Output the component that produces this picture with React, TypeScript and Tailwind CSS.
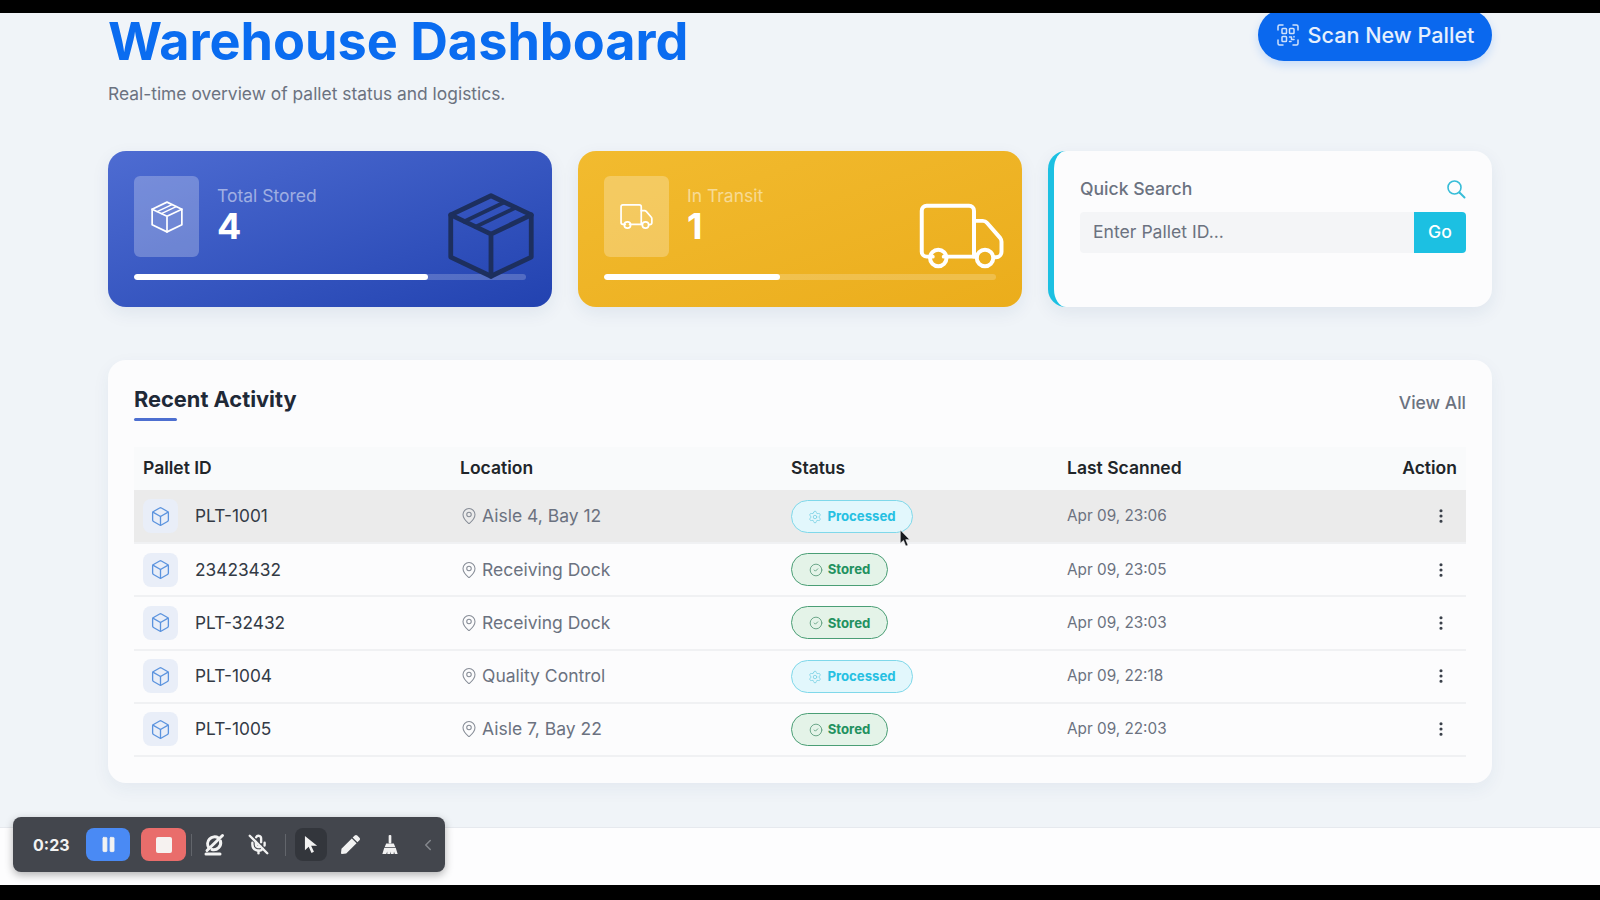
import { ChevronLeft, CircleCheck, EllipsisVertical, MapPin, MicOff, Pause, Settings, Square, Box } from "lucide-react";
import { FaPen } from "react-icons/fa";

const rows = [
  { id: "PLT-1001", location: "Aisle 4, Bay 12", status: "Processed", scanned: "Apr 09, 23:06", active: true },
  { id: "23423432", location: "Receiving Dock", status: "Stored", scanned: "Apr 09, 23:05" },
  { id: "PLT-32432", location: "Receiving Dock", status: "Stored", scanned: "Apr 09, 23:03" },
  { id: "PLT-1004", location: "Quality Control", status: "Processed", scanned: "Apr 09, 22:18" },
  { id: "PLT-1005", location: "Aisle 7, Bay 22", status: "Stored", scanned: "Apr 09, 22:03" },
];

function TapedBox({ className, strokeWidth = 1.5 }: { className?: string; strokeWidth?: number }) {
  return (
    <svg viewBox="0 0 24 24" fill="none" stroke="currentColor" strokeWidth={strokeWidth} strokeLinejoin="round" strokeLinecap="round" className={className}>
      <path d="M12 1.5 22.5 6.5v11L12 22.5 1.5 17.5v-11z" />
      <path d="M1.5 6.5 12 11.5l10.5-5M12 11.5v11" />
      <path d="M5 8.2 15.5 3.2M8 9.6 18.5 4.6" strokeWidth={strokeWidth * 0.8} />
    </svg>
  );
}

function DeliveryTruck({ className, strokeWidth = 1.6 }: { className?: string; strokeWidth?: number }) {
  return (
    <svg viewBox="0 0 32 24" fill="none" stroke="currentColor" strokeWidth={strokeWidth} strokeLinejoin="round" strokeLinecap="round" className={className}>
      <path d="M5 19.5H2.8A1.8 1.8 0 0 1 1 17.7V2.8A1.8 1.8 0 0 1 2.8 1h15.4A1.8 1.8 0 0 1 20 2.8v16.7" />
      <path d="M9 19.5h12" />
      <path d="M20 6.5h3.2c.6 0 1.1.2 1.5.7l4.8 5.5c.3.4.5.9.5 1.4v3.6a2 2 0 0 1-2 2h-.6" />
      <circle cx="7" cy="20" r="3" />
      <circle cx="24" cy="20" r="3" />
    </svg>
  );
}

function QrScan({ className }: { className?: string }) {
  return (
    <svg viewBox="0 0 24 24" fill="none" stroke="currentColor" strokeWidth="1.5" strokeLinecap="round" strokeLinejoin="round" className={className}>
      <path d="M2 7V3.5A1.5 1.5 0 0 1 3.5 2H7M17 2h3.5A1.5 1.5 0 0 1 22 3.5V7M22 17v3.5a1.5 1.5 0 0 1-1.5 1.5H17M7 22H3.5A1.5 1.5 0 0 1 2 20.5V17" />
      <rect x="6" y="5.5" width="4.5" height="5" rx="0.8" />
      <rect x="13.5" y="5.5" width="4.5" height="5" rx="0.8" />
      <rect x="6" y="13.5" width="4.5" height="5" rx="0.8" />
      <path d="M13.5 14h2v2.5h2.500M18 13.5v.5M13.5 18.500h1.500" />
    </svg>
  );
}

function StatCard({ tone, label, value, fill, small, big }: { tone: string; label: string; value: string; fill: string; small: React.ReactNode; big: React.ReactNode }) {
  return (
    <div className={`relative h-[156px] overflow-hidden rounded-[18px] px-[26px] pt-[25px] shadow-[0_6px_18px_rgba(30,60,120,0.08)] ${tone}`}>
      <div className="flex gap-[18px]">
        <div className="flex h-[81px] w-[65px] items-center justify-center rounded-[6px] bg-white/25 text-white">{small}</div>
        <div className="pt-[9px]">
          <p className="text-[17.5px] leading-[22px] text-white/50">{label}</p>
          <p className="text-[36px] font-bold leading-[38px] text-white">{value}</p>
        </div>
      </div>
      <div className="mt-[17px] h-[6px] overflow-hidden rounded-full bg-white/20">
        <div className={`h-full rounded-full bg-white ${fill}`} />
      </div>
      {big}
    </div>
  );
}

function StatusBadge({ status }: { status: string }) {
  if (status === "Stored") {
    return (
      <span className="inline-flex h-[33px] w-[97px] items-center justify-center gap-[5px] rounded-full border border-[#4a9e75] bg-[#e4f3e8] pt-px text-[13.2px] font-bold text-[#23915f]">
        <CircleCheck className="h-[14px] w-[14px] text-[#5a9c7c]" strokeWidth={1.5} />
        Stored
      </span>
    );
  }
  return (
    <span className="inline-flex h-[33px] w-[122px] items-center justify-center gap-[5px] rounded-full border border-[#7fd8ea] bg-[#e2f7fc] pt-px text-[13.2px] font-bold text-[#27c0e2]">
      <Settings className="h-[14px] w-[14px] text-[#7fd3e6]" strokeWidth={1.5} />
      Processed
    </span>
  );
}

function Toolbar() {
  return (
    <div className="absolute left-[13px] top-[817px] z-20 flex h-[55px] w-[432px] items-center rounded-[8px] bg-[#43464d] pl-[20px] text-[#f2f2f2] shadow-[0_3px_8px_rgba(0,0,0,0.3)]">
      <span className="w-[53px] text-[16px] font-bold">0:23</span>
      <span className="flex h-[33px] w-[44px] items-center justify-center rounded-[8px] bg-[#4a8af4]">
        <Pause className="h-[19px] w-[19px]" fill="currentColor" strokeWidth={1} />
      </span>
      <span className="ml-[11px] flex h-[33px] w-[45px] items-center justify-center rounded-[8px] bg-[#e96d6b]">
        <Square className="h-[16px] w-[16px] rounded-[2px] bg-[#f6f2f0]" strokeWidth={0} />
      </span>
      <span className="ml-[5px] h-[22px] w-px bg-[#62656b]" />
      <span className="ml-[11px] flex w-[22px] justify-center">
        <svg viewBox="0 0 22 22" className="h-[23px] w-[23px]" fill="none" stroke="currentColor" strokeWidth="3" strokeLinecap="round">
          <path d="M6 14.5A7 7 0 0 1 15.5 4.5" />
          <path d="M17.5 7.5A7 7 0 0 1 9 16" />
          <path d="M3 20.5h14M19.5 2 4 17" />
        </svg>
      </span>
      <MicOff className="ml-[23px] h-[21px] w-[21px]" strokeWidth={2.7} />
      <span className="ml-[16px] h-[22px] w-px bg-[#62656b]" />
      <span className="ml-[9px] flex h-[33px] w-[32px] items-center justify-center rounded-[8px] bg-[#33363c]">
        <svg viewBox="0 0 16 20" className="h-[19px] w-[15px]" fill="currentColor">
          <path d="M1 1v15l4-3.6 3 6.6 2.6-1.2-3-6.4H14z" />
        </svg>
      </span>
      <FaPen className="ml-[14px] h-[19px] w-[19px]" />
      <span className="ml-[21px] flex w-[18px] justify-center">
        <svg viewBox="0 0 18 22" className="h-[21px] w-[18px]" fill="currentColor">
          <rect x="7.6" y="1" width="2.8" height="9" rx="1" />
          <path d="M5 10h8l1.5 3.5h-11z" />
          <path d="M3 14.5h12l2 6.5h-3l-.8-2.6-.4 2.6h-2.8l-.3-2.6-.6 2.6H6.200l-.1-2.6-1 2.6H1z" />
        </svg>
      </span>
      <ChevronLeft className="ml-[20px] h-[18px] w-[18px] text-[#85888e]" strokeWidth={2} />
    </div>
  );
}

export default function App() {
  return (
    <div className="relative flex h-[900px] flex-col overflow-hidden bg-black font-['Inter',sans-serif]">
      {/* black band of the recording, sits over the clipped top of the page */}
      <div className="relative z-10 h-[13px] shrink-0 bg-black" />
      <main className="min-h-0 flex-1 bg-[#f0f4f8] px-[108px]">
        <header className="flex items-start justify-between">
          <div>
            <h1 className="text-[52.2px] font-bold leading-[64px] mt-[-4px] mb-[-4px] text-[#0a6cf0]">Warehouse Dashboard</h1>
            <p className="mt-[13px] text-[17.4px] leading-[24px] text-[#6b7280]">Real-time overview of pallet status and logistics.</p>
          </div>
          <button className="mt-[-4px] flex h-[52px] w-[234px] items-center justify-center gap-[8px] rounded-full bg-[#0a68ee] text-[21.6px] font-medium text-white/90 shadow-[0_4px_10px_rgba(13,110,253,0.18)]">
            <QrScan className="h-[24px] w-[24px] text-white/80" />
            Scan New Pallet
          </button>
        </header>

        <section className="mt-[45px] grid grid-cols-3 gap-[26px]">
          <StatCard
            tone="bg-gradient-to-br from-[#4e6cd2] to-[#2242b0]"
            label="Total Stored"
            value="4"
            fill="w-[75%]"
            small={<TapedBox className="h-[34px] w-[34px]" strokeWidth={1.2} />}
            big={<TapedBox className="absolute left-[337px] top-[39px] h-[92px] w-[92px] text-[#1d2f5e]" strokeWidth={1.25} />}
          />
          <StatCard
            tone="bg-gradient-to-br from-[#f2bb2f] to-[#ebad1b]"
            label="In Transit"
            value="1"
            fill="w-[45%]"
            small={<DeliveryTruck className="h-[27px] w-[34px]" strokeWidth={1.6} />}
            big={<DeliveryTruck className="absolute left-[339px] top-[52px] h-[66px] w-[92px] text-white" strokeWidth={1.45} />}
          />
          <div className="h-[156px] rounded-[18px] border-l-[6px] border-[#1cc0e2] bg-[#fcfcfd] pl-[26px] pr-[26px] pt-[26px] shadow-[0_6px_18px_rgba(30,60,120,0.08)]">
            <div className="flex items-center justify-between">
              <p className="text-[17.6px] font-medium leading-[24px] text-[#6b7280]">Quick Search</p>
              <svg viewBox="0 0 20 20" className="h-[20px] w-[20px] text-[#37bdd8]" fill="none" stroke="currentColor" strokeWidth="1.6" strokeLinecap="round">
                <circle cx="8.5" cy="8.5" r="6.5" />
                <path d="m13.5 13.500 5 5" strokeWidth="2" />
              </svg>
            </div>
            <div className="mt-[11px] flex h-[41px]">
              <div className="flex flex-1 items-center rounded-l-[4px] bg-[#f4f5f7] pl-[13px] text-[17.6px] text-[#6b7280]">Enter Pallet ID...</div>
              <button className="w-[52px] rounded-r-[4px] bg-[#1cc0e2] text-[17.6px] font-medium text-white">Go</button>
            </div>
          </div>
        </section>

        <section className="mt-[53px] h-[423px] rounded-[18px] bg-[#fcfcfd] px-[26px] pt-[24px] shadow-[0_6px_18px_rgba(30,60,120,0.06)]">
          <div className="flex items-start justify-between">
            <div>
              <h2 className="text-[21.8px] font-bold leading-[30px] text-[#1f2937]">Recent Activity</h2>
              <div className="mt-[4px] h-[3px] w-[43px] rounded-full bg-[#4d6fd0]" />
            </div>
            <a className="mt-[5px] text-[17.5px] font-medium leading-[28px] text-[#6b7280]">View All</a>
          </div>
          <table className="mt-[26px] w-full table-fixed border-collapse">
            <thead>
              <tr className="h-[43px] bg-[#f9fafb] text-left text-[17.5px] text-[#212529]">
                <th className="w-[317px] pl-[9px] font-semibold">Pallet ID</th>
                <th className="w-[331px] pl-[9px] font-semibold">Location</th>
                <th className="w-[276px] pl-[9px] font-semibold">Status</th>
                <th className="pl-[9px] font-semibold">Last Scanned</th>
                <th className="w-[100px] pr-[9px] text-right font-semibold">Action</th>
              </tr>
            </thead>
            <tbody>
              {rows.map((r) => (
                <tr key={r.id} className={`h-[53.2px] border-b-2 border-[#f0f1f3] ${r.active ? "bg-[#ebebeb]" : ""}`}>
                  <td className="pl-[9px]">
                    <div className="flex items-center gap-[17px]">
                      <span className="flex h-[34px] w-[35px] items-center justify-center rounded-[8px] bg-[#e9eef8]">
                        <Box className="h-[21px] w-[21px] text-[#5b93de]" strokeWidth={1.5} />
                      </span>
                      <span className="text-[17.3px] text-[#333a45]">{r.id}</span>
                    </div>
                  </td>
                  <td className="pl-[9px]">
                    <div className="flex items-center gap-[4px] text-[17.5px] text-[#6b7280]">
                      <MapPin className="h-[20px] w-[18px] text-[#868c96]" strokeWidth={1.4} />
                      {r.location}
                    </div>
                  </td>
                  <td className="pl-[9px]">
                    <StatusBadge status={r.status} />
                  </td>
                  <td className="pl-[9px] pt-px text-[15.3px] text-[#6b7280]">{r.scanned}</td>
                  <td className="pr-[9px] text-right">
                    <EllipsisVertical className="ml-auto mr-[7px] h-[18px] w-[18px] text-[#3a404a]" strokeWidth={2.2} />
                  </td>
                </tr>
              ))}
            </tbody>
          </table>
        </section>
      </main>
      <footer className="h-[58px] shrink-0 border-t border-[#e6e9ee] bg-[#fdfdfe]" />
      <div className="h-[15px] shrink-0 bg-black" />
      <Toolbar />
      <svg viewBox="0 0 12 20" className="absolute left-[899px] top-[529px] h-[19px] w-[12px]" fill="#16181c" stroke="#fff" strokeWidth="0.6">
        <path d="M1 1v14l3.4-3 2.4 6 2.4-1-2.4-5.8H11z" />
      </svg>
    </div>
  );
}
